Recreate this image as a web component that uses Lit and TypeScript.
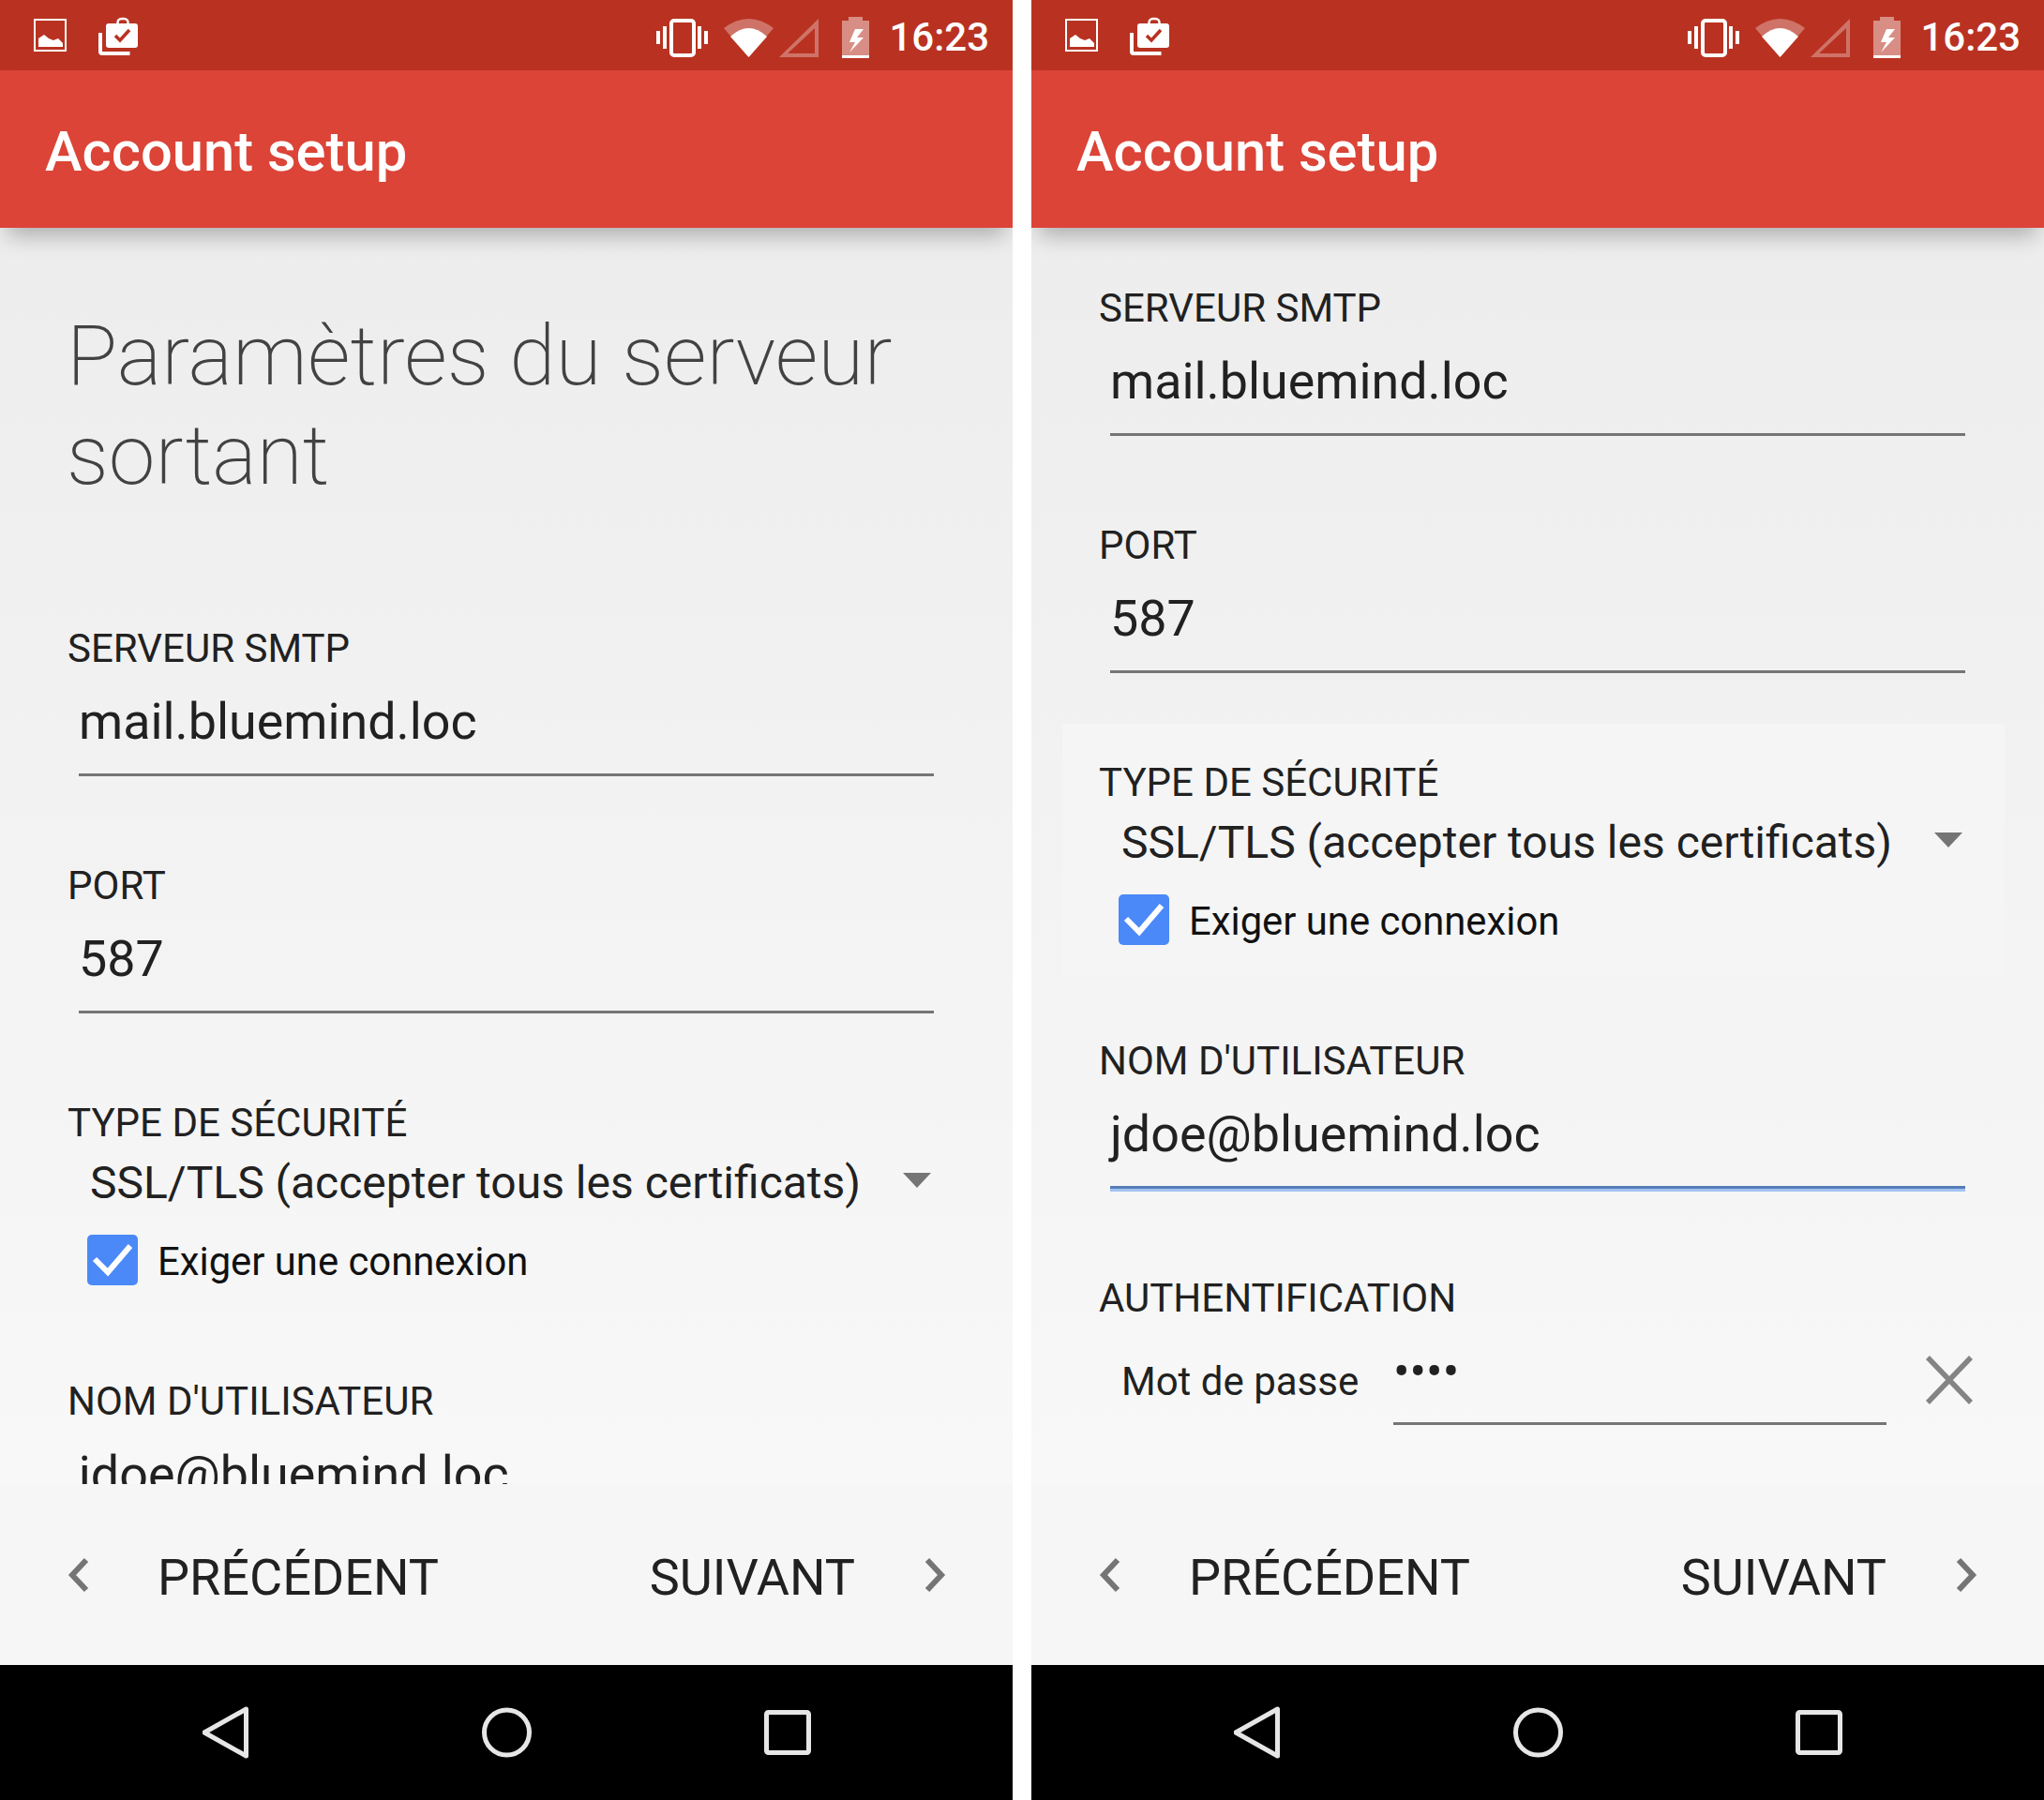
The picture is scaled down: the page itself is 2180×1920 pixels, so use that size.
import { LitElement, html, css, svg } from "lit";
import { customElement } from "lit/decorators.js";

const statusLeft = svg`
  <rect x="37" y="21" width="33" height="33" fill="none" stroke="#fff" stroke-width="2"/>
  <path d="M41 50V41L47 37L52 41L57 43L62 41L67 46V50Z" fill="#fff"/>
  <path d="M107 35V55Q107 57 109 57H138.500" fill="none" stroke="#fff" stroke-width="4"/>
  <rect x="113" y="25" width="34" height="26" rx="3" fill="#fff"/>
  <rect x="125.500" y="20" width="11" height="9" rx="4" fill="none" stroke="#fff" stroke-width="2.500"/>
  <path d="M123 38L128 43L138 32" fill="none" stroke="#b93221" stroke-width="3.500"/>`;

const statusRight = svg`
  <rect x="717" y="19" width="24" height="37" rx="3" fill="none" stroke="#fff" stroke-width="4"/>
  <path d="M701 30h4v14h-4zM708 25h4v24h-4zM745 25h4v24h-4zM752 30h4v14h-4z" fill="#fff"/>
  <path d="M799.500 58L773 27Q799.500 7 826 27Z" fill="#fff" fill-opacity=".32"/>
  <path d="M799.500 58L780 36Q799.500 18 819 36Z" fill="#fff"/>
  <path d="M832 58L874 17V58ZM841 54H870V27Z" fill="#fff" fill-opacity=".32" fill-rule="evenodd"/>
  <path d="M906 15h15v4h7v37h-29V19h7z" fill="#fff" fill-opacity=".45"/>
  <path d="M899 56h29v3h-29z" fill="#fff"/>
  <path d="M913 28L907 42H913L907 53L922 37H915L922 28Z" fill="#fff"/>`;

@customElement("app-root")
export class AppRoot extends LitElement {
  static styles = css`
    :host {
      display: grid;
      grid-template-columns: 1080px 1080px;
      gap: 20px;
      width: 2180px;
      height: 1920px;
      background: #fff;
      font-family: Roboto, "Noto Sans", sans-serif;
      color: #212121;
    }
    .phone {
      display: flex;
      flex-direction: column;
      height: 1920px;
      overflow: hidden;
      background: linear-gradient(#ededed 243px, #f8f8f8 1583px);
    }
    .status {
      flex: none;
      height: 75px;
      display: flex;
      align-items: center;
      justify-content: space-between;
      padding: 0 25px 0 30px;
      background: #b93221;
      color: #fff;
    }
    .status-right { display: flex; align-items: center; gap: 19px; }
    .status-icons-l { width: 125px; height: 55px; display: block; }
    .status-icons-r { width: 230px; height: 55px; display: block; }
    .time { font-size: 42px; font-weight: 500; line-height: 55px; padding-top: 3px; }
    .appbar {
      position: relative;
      z-index: 1;
      flex: none;
      height: 168px;
      display: flex;
      align-items: center;
      padding: 5px 0 0 48px;
      box-sizing: border-box;
      background: #db4437;
      color: #fff;
      font-size: 59.700px;
      font-weight: 500;
      box-shadow: 0 16px 22px -8px rgba(0, 0, 0, .28);
    }
    .scroll {
      flex: none;
      height: 1340px;
      overflow: hidden;
      box-sizing: border-box;
      padding-left: 72px;
    }
    .scroll.top { padding-top: 60px; }
    h1 {
      margin: 84px 0 127px -1px;
      font-size: 89.500px;
      font-weight: 200;
      line-height: 106px;
      width: 960px;
      color: #424242;
    }
    .label { font-size: 42px; line-height: 50px; height: 50px; padding-top: 1px; box-sizing: border-box; }
    .field { padding-bottom: 91px; }
    .field.short { padding-bottom: 54px; }
    .field.auth { padding-bottom: 0; }
    .value {
      margin: 18px 0 0 12px;
      padding-top: 1px;
      box-sizing: border-box;
      font-size: 53.800px;
      line-height: 70px;
      height: 70px;
    }
    .line {
      margin: 21px 0 0 12px;
      width: 912px;
      height: 3px;
      background: #757575;
    }
    .line.focus {
      height: 6px;
      background: linear-gradient(#567db8 50%, #a3c3f2 50%);
    }
    .field.focused { padding-bottom: 88px; }
    .panel {
      margin: 0 42px 64px -39px;
      padding: 37px 0 34px 39px;
      height: 199px;
    }
    .panel.lit { background: #f5f5f5; }
    .select {
      margin: 4px 0 0 24px;
      padding: 2px 45px 0 0;
      box-sizing: border-box;
      display: flex;
      align-items: center;
      justify-content: space-between;
      font-size: 48px;
      line-height: 70px;
      height: 70px;
    }
    .arrow { width: 30px; height: 16px; display: block; margin-top: -6px; }
    .check {
      margin: 21px 0 0 21px;
      display: flex;
      align-items: center;
      gap: 21px;
      font-size: 41.800px;
      height: 54px;
      color: #111;
    }
    .check span { position: relative; top: 1px; }
    .box {
      width: 54px;
      height: 54px;
      border-radius: 5px;
      background: #4a89f7;
      display: block;
    }
    .pwd-row {
      margin: 27px 0 0 24px;
      display: flex;
      align-items: flex-start;
      position: relative;
    }
    .pwd-label {
      width: 290px;
      font-size: 42px;
      line-height: 50px;
      margin-top: 13px;
      flex: none;
    }
    .pwd-input {
      width: 526px;
      height: 84px;
      box-sizing: border-box;
      border-bottom: 3px solid #757575;
      padding: 3px 0 0 0;
      font-size: 52px;
      line-height: 50px;
      flex: none;
    }
    .close { width: 50px; height: 52px; margin: 10px 0 0 42px; display: block; flex: none; }
    .bottom {
      flex: none;
      height: 193px;
      display: flex;
      align-items: center;
      justify-content: space-between;
      box-sizing: border-box;
      padding: 0 71px 0 72px;
      background: #f6f6f6;
      font-size: 54px;
    }
    .btn { display: flex; align-items: center; gap: 72px; }
    .btn.next { gap: 73px; }
    .btn span { position: relative; top: 3px; }
    .chev { width: 24px; height: 38px; display: block; }
    .nav {
      flex: 1;
      background: #000;
      display: flex;
      align-items: center;
      padding-left: 216px;
    }
    .nav-ic { width: 672px; height: 60px; display: block; }
  `;

  private field(label: string, value: string, cls = "") {
    return html`<div class="field ${cls}">
      <div class="label">${label}</div>
      <div class="value">${value}</div>
      <div class="line ${cls === "focused" ? "focus" : ""}"></div>
    </div>`;
  }

  private security(lit: boolean) {
    return html`<div class="panel ${lit ? "lit" : ""}">
      <div class="label">TYPE DE SÉCURITÉ</div>
      <div class="select">
        <span>SSL/TLS (accepter tous les certificats)</span>
        <svg class="arrow" viewBox="0 0 30 16"><path d="M0 0H30L15 16Z" fill="#757575"/></svg>
      </div>
      <div class="check">
        <svg class="box" viewBox="0 0 54 54"><path d="M8 26L22 40L46 12" fill="none" stroke="#fff" stroke-width="6"/></svg>
        <span>Exiger une connexion</span>
      </div>
    </div>`;
  }

  private chrome(body: unknown, scrollCls: string) {
    return html`<div class="phone">
      <div class="status">
        <svg class="status-icons-l" viewBox="30 10 125 55">${statusLeft}</svg>
        <div class="status-right">
          <svg class="status-icons-r" viewBox="700 7 230 55">${statusRight}</svg>
          <span class="time">16:23</span>
        </div>
      </div>
      <div class="appbar">Account setup</div>
      <div class="scroll ${scrollCls}">${body}</div>
      <div class="bottom">
        <div class="btn">
          <svg class="chev" viewBox="0 0 24 38"><path d="M20 3L5 19L20 35" fill="none" stroke="#757575" stroke-width="6"/></svg>
          <span>PRÉCÉDENT</span>
        </div>
        <div class="btn next">
          <span>SUIVANT</span>
          <svg class="chev" viewBox="0 0 24 38"><path d="M4 3L19 19L4 35" fill="none" stroke="#757575" stroke-width="6"/></svg>
        </div>
      </div>
      <div class="nav">
        <svg class="nav-ic" viewBox="216 1818 672 60">
          <path d="M262.500 1823V1873L218 1848Z" fill="none" stroke="#e6e6e6" stroke-width="5" stroke-linejoin="round"/>
          <circle cx="540.500" cy="1848" r="24" fill="none" stroke="#e6e6e6" stroke-width="5"/>
          <rect x="817.500" y="1826.500" width="45" height="43" rx="2" fill="none" stroke="#e6e6e6" stroke-width="5"/>
        </svg>
      </div>
    </div>`;
  }

  render() {
    const left = html`
      <h1>Paramètres du serveur sortant</h1>
      ${this.field("SERVEUR SMTP", "mail.bluemind.loc")}
      ${this.field("PORT", "587", "short")}
      ${this.security(false)}
      ${this.field("NOM D'UTILISATEUR", "jdoe@bluemind.loc")}
    `;
    const right = html`
      ${this.field("SERVEUR SMTP", "mail.bluemind.loc")}
      ${this.field("PORT", "587", "short")}
      ${this.security(true)}
      ${this.field("NOM D'UTILISATEUR", "jdoe@bluemind.loc", "focused")}
      <div class="field auth">
        <div class="label">AUTHENTIFICATION</div>
        <div class="pwd-row">
          <div class="pwd-label">Mot de passe</div>
          <div class="pwd-input">••••</div>
          <svg class="close" viewBox="0 0 50 52"><path d="M2 2L48 50M48 2L2 50" fill="none" stroke="#848484" stroke-width="5.500"/></svg>
        </div>
      </div>
    `;
    return html`${this.chrome(left, "")}${this.chrome(right, "top")}`;
  }
}
